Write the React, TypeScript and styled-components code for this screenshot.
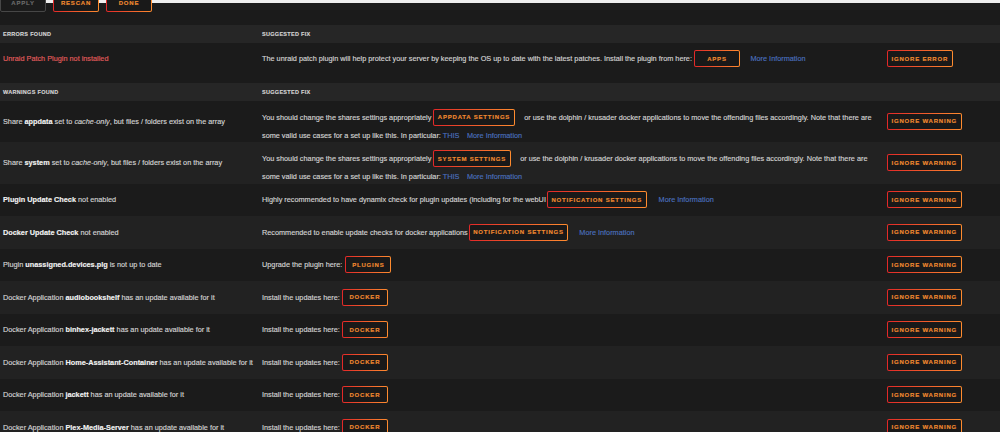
import React from "react";
import styled, { createGlobalStyle, css } from "styled-components";

const GlobalStyle = createGlobalStyle`
  html, body {
    margin: 0;
    padding: 0;
    background: #1b1b1b;
  }
  body {
    font-family: "Liberation Sans", Arial, sans-serif;
    font-size: 7.3px;
    color: #d2d2d2;
    overflow: hidden;
    -webkit-text-stroke: 0.15px currentColor;
  }
`;

const Page = styled.div`
  width: 1000px;
  height: 432px;
  overflow: hidden;
  background: #1b1b1b;
`;

const Toolbar = styled.div`
  display: flex;
  align-items: flex-start;
  gap: 7px;
  height: 25px;
  background: linear-gradient(to bottom, #eeeeee 0, #eeeeee 3px, #1b1b1b 3px);
`;

const gradientBorder = css`
  border: 1px solid transparent;
  background: linear-gradient(#191919, #191919) padding-box,
    linear-gradient(90deg, #e22828 0%, #ff8c2f 100%) border-box;
  color: #f08a30;
`;

const TopButton = styled.button<{ $disabled?: boolean }>`
  box-sizing: border-box;
  height: 19px;
  min-width: 46px;
  margin-top: -7px;
  padding: 0 4px;
  border-radius: 2px;
  font-family: inherit;
  font-weight: bold;
  font-size: 6px;
  letter-spacing: 0.8px;
  text-transform: uppercase;
  ${(p) =>
    p.$disabled
      ? css`
          border: 1px solid #474747;
          background: #1b1b1b;
          color: #6a6a6a;
        `
      : gradientBorder}
`;

const Section = styled.section<{ $gap?: number }>`
  margin-bottom: ${(p) => p.$gap ?? 0}px;
`;

const gridCols = css`
  display: grid;
  grid-template-columns: 259px 625px 1fr;
  padding-left: 3px;
`;

const HeaderRow = styled.div`
  ${gridCols};
  height: 17.5px;
  align-items: center;
  background: #262626;
  color: #d4d4d4;
  font-weight: bold;
  font-size: 5.5px;
  letter-spacing: 0.3px;
  text-transform: uppercase;
`;

const Row = styled.div<{ $alt?: boolean }>`
  ${gridCols};
  min-height: 32.5px;
  align-items: center;
  background: ${(p) => (p.$alt ? "#222222" : "#1b1b1b")};
`;

const Desc = styled.div<{ $error?: boolean }>`
  white-space: nowrap;
  color: ${(p) => (p.$error ? "#e05c5c" : "#d2d2d2")};
  b {
    color: #f2f2f2;
    font-weight: bold;
  }
  i {
    font-style: italic;
  }
`;

const FixCell = styled.div<{ $twoLine?: boolean }>`
  display: flex;
  flex-direction: column;
  ${(p) =>
    p.$twoLine &&
    css`
      padding: 8px 0 2px;
    `}
`;

const Line = styled.div<{ $second?: boolean }>`
  display: flex;
  align-items: center;
  height: ${(p) => (p.$second ? "10px" : "17px")};
  margin-top: ${(p) => (p.$second ? "4.5px" : "0")};
  white-space: pre;
`;

const Txt = styled.span`
  white-space: pre;
`;

const Link = styled.a<{ $ml?: number }>`
  color: #4a6fbd;
  text-decoration: none;
  margin-left: ${(p) => p.$ml ?? 0}px;
  white-space: pre;
`;

const Btn = styled.button<{ $ml?: number; $mr?: number }>`
  box-sizing: border-box;
  display: inline-flex;
  align-items: center;
  justify-content: center;
  flex-shrink: 0;
  height: 17px;
  min-width: 46px;
  padding: 0 3.5px;
  margin: 0 ${(p) => p.$mr ?? 0}px 0 ${(p) => p.$ml ?? 0}px;
  border-radius: 2px;
  font-family: inherit;
  font-weight: bold;
  font-size: 6px;
  letter-spacing: 0.8px;
  text-transform: uppercase;
  ${gradientBorder}
`;

const ActionCell = styled.div`
  display: flex;
  align-items: center;
`;

const dockerApps: string[] = [
  "audiobookshelf",
  "binhex-jackett",
  "Home-Assistant-Container",
  "jackett",
  "Plex-Media-Server",
];

const ShareRow: React.FC<{ share: string; button: string; alt?: boolean }> = ({
  share,
  button,
  alt,
}) => (
  <Row $alt={alt}>
    <Desc>
      Share <b>{share}</b> set to <i>cache-only</i>, but files / folders exist on the array
    </Desc>
    <FixCell $twoLine>
      <Line>
        <Txt>You should change the shares settings appropriately</Txt>
        <Btn $ml={2} $mr={9.5}>{button}</Btn>
        <Txt>
          or use the dolphin / krusader docker applications to move the offending files accordingly. Note that there are
        </Txt>
      </Line>
      <Line $second>
        <Txt>some valid use cases for a set up like this. In particular:</Txt>
        <Link $ml={2}>THIS</Link>
        <Link $ml={7.5}>More Information</Link>
      </Line>
    </FixCell>
    <ActionCell>
      <Btn>Ignore Warning</Btn>
    </ActionCell>
  </Row>
);

export default function App() {
  return (
    <Page>
      <GlobalStyle />
      <Toolbar>
        <TopButton $disabled>Apply</TopButton>
        <TopButton>Rescan</TopButton>
        <TopButton>Done</TopButton>
      </Toolbar>

      <Section $gap={8}>
        <HeaderRow>
          <div>Errors Found</div>
          <div>Suggested Fix</div>
          <div />
        </HeaderRow>
        <Row>
          <Desc $error>Unraid Patch Plugin not installed</Desc>
          <FixCell>
            <Line>
              <Txt>
                The unraid patch plugin will help protect your server by keeping the OS up to date with the latest patches. Install the plugin from here:
              </Txt>
              <Btn $ml={2}>Apps</Btn>
              <Link $ml={10.5}>More Information</Link>
            </Line>
          </FixCell>
          <ActionCell>
            <Btn>Ignore Error</Btn>
          </ActionCell>
        </Row>
      </Section>

      <Section>
        <HeaderRow>
          <div>Warnings Found</div>
          <div>Suggested Fix</div>
          <div />
        </HeaderRow>

        <ShareRow share="appdata" button="Appdata Settings" />
        <ShareRow share="system" button="System Settings" alt />

        <Row>
          <Desc>
            <b>Plugin Update Check</b> not enabled
          </Desc>
          <FixCell>
            <Line>
              <Txt>Highly recommended to have dynamix check for plugin updates (including for the webUI</Txt>
              <Btn $ml={1}>Notification Settings</Btn>
              <Link $ml={12}>More Information</Link>
            </Line>
          </FixCell>
          <ActionCell>
            <Btn>Ignore Warning</Btn>
          </ActionCell>
        </Row>

        <Row $alt>
          <Desc>
            <b>Docker Update Check</b> not enabled
          </Desc>
          <FixCell>
            <Line>
              <Txt>Recommended to enable update checks for docker applications</Txt>
              <Btn $ml={1}>Notification Settings</Btn>
              <Link $ml={11}>More Information</Link>
            </Line>
          </FixCell>
          <ActionCell>
            <Btn>Ignore Warning</Btn>
          </ActionCell>
        </Row>

        <Row>
          <Desc>
            Plugin <b>unassigned.devices.plg</b> is not up to date
          </Desc>
          <FixCell>
            <Line>
              <Txt>Upgrade the plugin here:</Txt>
              <Btn $ml={3}>Plugins</Btn>
            </Line>
          </FixCell>
          <ActionCell>
            <Btn>Ignore Warning</Btn>
          </ActionCell>
        </Row>

        {dockerApps.map((app, i) => (
          <Row key={app} $alt={i % 2 === 0}>
            <Desc>
              Docker Application <b>{app}</b> has an update available for it
            </Desc>
            <FixCell>
              <Line>
                <Txt>Install the updates here:</Txt>
                <Btn $ml={2}>Docker</Btn>
              </Line>
            </FixCell>
            <ActionCell>
              <Btn>Ignore Warning</Btn>
            </ActionCell>
          </Row>
        ))}
      </Section>
    </Page>
  );
}
